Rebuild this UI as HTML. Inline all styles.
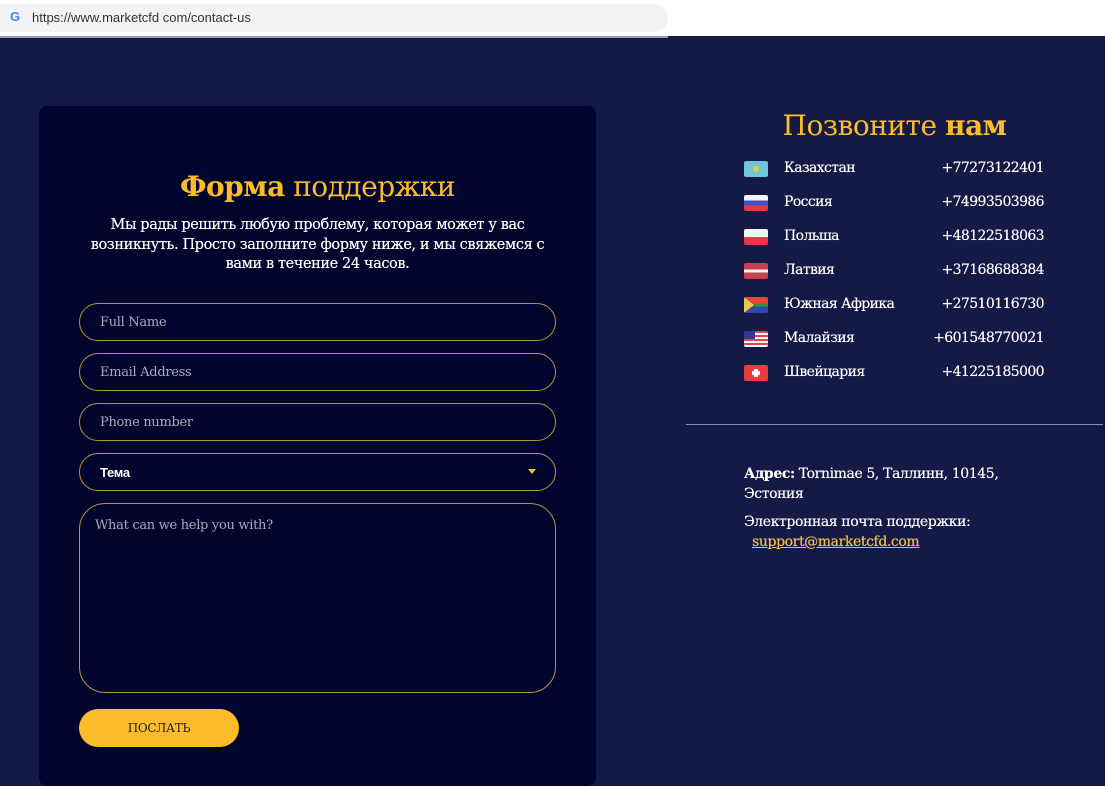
<!DOCTYPE html>
<html><head><meta charset="utf-8"><style>
*{margin:0;padding:0;box-sizing:border-box}
body{width:1105px;height:776px;overflow:hidden;background:#141a45;font-family:"DejaVu Serif","Liberation Serif",serif;color:#fff;position:relative}
.bar{position:absolute;left:0;top:0;width:1105px;height:36px;background:#fff}
.bar .in{position:absolute;left:0;top:4px;width:668px;height:28px;background:#f1f3f4;border-radius:0 14px 14px 0}
.bar .g{position:absolute;left:10px;top:9px;font:bold 13px "Liberation Sans",sans-serif;color:#4285f4}
.bar .u{position:absolute;left:32px;top:10px;font:13px "Liberation Sans",sans-serif;color:#333}
.line{position:absolute;left:0;top:36px;width:668px;height:2px;background:#9aa0b0}
.panel{position:absolute;left:39px;top:106px;width:557px;height:680px;background:#01052e;border-radius:8px}
h1{position:absolute;left:0;width:557px;top:64px;text-align:center;font-size:28px;font-weight:normal;color:#fbbb2a;letter-spacing:-0.5px}
.p{position:absolute;left:42px;width:473px;top:110px;text-align:center;font-size:14.5px;line-height:19.5px;letter-spacing:-0.4px;font-weight:500;text-shadow:0 0 0.4px #fff}
.f{position:absolute;left:40px;width:477px;height:38px;border:1px solid #b8923a;border-radius:19px;font-size:13px;color:#a8aabb;padding:11px 20px;letter-spacing:-0.3px}
.btn{position:absolute;left:40px;top:603px;width:160px;height:38px;background:#fbbb2a;border-radius:19px;color:#222;font-size:12px;text-align:center;line-height:38px;letter-spacing:-0.3px}
h2{position:absolute;left:686px;width:417px;top:109px;text-align:center;font-size:28px;font-weight:normal;color:#fbbb2a;letter-spacing:-0.5px}
.row{position:absolute;left:744px;width:300px;height:20px;font-size:14px;letter-spacing:-0.6px;text-shadow:0 0 0.4px #fff}
.row .fl{position:absolute;left:0;top:1px;width:24px;height:16px;border-radius:2px;overflow:hidden}
.row .n{position:absolute;left:40px;top:0}
.row .t{position:absolute;right:0;top:0}
.hr{position:absolute;left:686px;top:424px;width:417px;height:1px;background:#8b90a8}
.addr{position:absolute;left:744px;top:465px;width:300px;font-size:14px;line-height:19.5px;letter-spacing:-0.4px;text-shadow:0 0 0.4px #fff}
a{color:#fbbb2a}
</style></head><body>
<div class="bar"><div class="in"></div><span class="g">G</span><span class="u">https://www.marketcfd com/contact-us</span></div>
<div class="line"></div>
<div class="panel">
<h1><b>Форма</b> поддержки</h1>
<div class="p">Мы рады решить любую проблему, которая может у вас возникнуть. Просто заполните форму ниже, и мы свяжемся с вами в течение 24 часов.</div>
<div class="f" style="top:197px">Full Name</div>
<div class="f" style="top:247px">Email Address</div>
<div class="f" style="top:297px">Phone number</div>
<div class="f" style="top:347px;color:#fff;font-weight:bold;font-family:'Liberation Sans',sans-serif">Тема<span style="position:absolute;right:19px;top:15px;width:0;height:0;border-left:4px solid transparent;border-right:4px solid transparent;border-top:5px solid #fbbb2a"></span></div>
<div class="f" style="top:397px;height:190px;border-radius:26px;padding:14px 15px">What can we help you with?</div>
<div class="btn">ПОСЛАТЬ</div>
</div>
<h2>Позвоните <b>нам</b></h2>
<div class="row" style="top:160px"><div class="fl" style="background:#6fc6d8"><div style="position:absolute;left:9px;top:5px;width:6px;height:6px;border-radius:50%;background:#e8c94a"></div></div><span class="n">Казахстан</span><span class="t">+77273122401</span></div>
<div class="row" style="top:194px"><div class="fl" style="background:linear-gradient(#f4f4f4 33%,#3b4fc8 33% 66%,#e23c3c 66%)"></div><span class="n">Россия</span><span class="t">+74993503986</span></div>
<div class="row" style="top:228px"><div class="fl" style="background:linear-gradient(#f4f4f4 50%,#e8394a 50%)"></div><span class="n">Польша</span><span class="t">+48122518063</span></div>
<div class="row" style="top:262px"><div class="fl" style="background:linear-gradient(#c84050 40%,#f4f4f4 40% 60%,#c84050 60%)"></div><span class="n">Латвия</span><span class="t">+37168688384</span></div>
<div class="row" style="top:296px"><div class="fl" style="background:linear-gradient(#e0463c 40%,#3b8a3b 40% 60%,#3048a8 60%)"><div style="position:absolute;left:0;top:0;border-top:8px solid transparent;border-bottom:8px solid transparent;border-left:10px solid #e8c94a"></div></div><span class="n">Южная Африка</span><span class="t">+27510116730</span></div>
<div class="row" style="top:330px"><div class="fl" style="background:repeating-linear-gradient(#e04848 0 2px,#f4f4f4 2px 4px)"><div style="position:absolute;left:0;top:0;width:11px;height:8px;background:#2a3a9a"></div></div><span class="n">Малайзия</span><span class="t">+601548770021</span></div>
<div class="row" style="top:364px"><div class="fl" style="background:#ea3c3c"><div style="position:absolute;left:10px;top:4px;width:4px;height:8px;background:#fff"></div><div style="position:absolute;left:8px;top:6px;width:8px;height:4px;background:#fff"></div></div><span class="n">Швейцария</span><span class="t">+41225185000</span></div>
<div class="hr"></div>
<div class="addr"><b>Адрес:</b> Tornimae 5, Таллинн, 10145, Эстония<div style="margin-top:9px">Электронная почта поддержки:<br>&nbsp;&nbsp;<a href="#">support@marketcfd.com</a></div></div>
</body></html>
